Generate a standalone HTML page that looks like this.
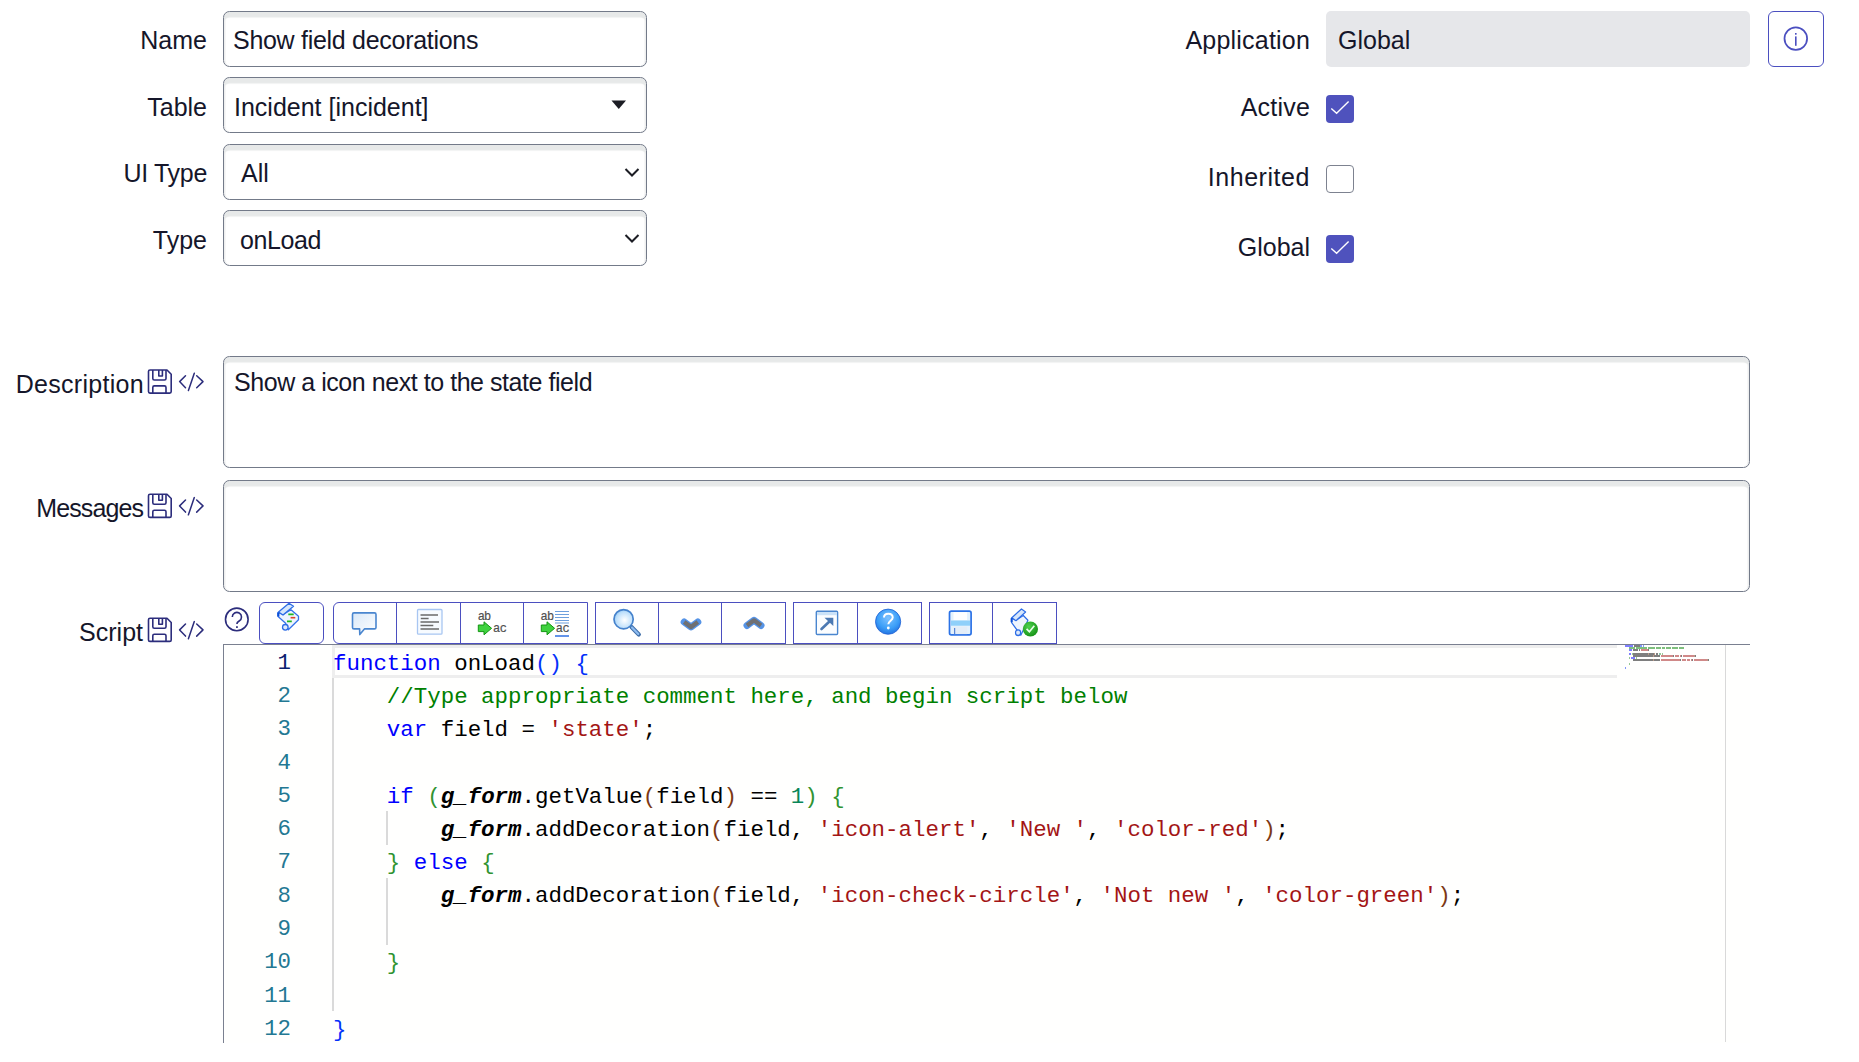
<!DOCTYPE html>
<html>
<head>
<meta charset="utf-8">
<style>
html,body{margin:0;padding:0;background:#fff;}
body{width:1859px;height:1062px;position:relative;overflow:hidden;font-family:"Liberation Sans",sans-serif;color:#15162a;}
.a{position:absolute;}
.lbl{position:absolute;font-size:25px;line-height:28px;white-space:nowrap;text-align:right;}
.inp{position:absolute;box-sizing:border-box;border:1px solid #737a89;border-radius:6.5px;background:#fff;box-shadow:inset 0 6px 1px -0.5px #e7e9e9, inset 2px 0 1px -0.5px #eff0f0, inset -2px 0 1px -0.5px #eff0f0;}
.val{position:absolute;font-size:25px;line-height:28px;white-space:nowrap;}
.cb{position:absolute;box-sizing:border-box;width:28px;height:28px;border-radius:4px;}
.cb.on{background:#4f52bd;}
.cb.off{border:1px solid #7d8290;background:#fff;}
.code{position:absolute;font-family:"Liberation Mono",monospace;font-size:22.44px;line-height:33.28px;white-space:pre;color:#000;}
.ln{position:absolute;font-family:"Liberation Mono",monospace;font-size:22.4px;line-height:33.28px;color:#237893;text-align:right;width:60px;}
.k{color:#0000ff}.c{color:#008000}.s{color:#a31515}.n{color:#098658}
.b1{color:#0431fa}.b2{color:#319331}.b3{color:#7b3814}
.gf{font-weight:bold;font-style:italic}
.tb{position:absolute;box-sizing:border-box;top:602px;height:42px;border:1px solid #4b4fc0;background:#fff;}
.tdiv{position:absolute;top:0;bottom:0;width:1px;background:#4b4fc0;}
.mm div{position:absolute;height:2px;}
</style>
</head>
<body>
<!-- Left column labels -->
<div class="lbl" style="right:1652px;top:26px;">Name</div>
<div class="lbl" style="right:1652px;top:93px;">Table</div>
<div class="lbl" style="right:1652px;top:159px;letter-spacing:-0.3px;">UI Type</div>
<div class="lbl" style="right:1652px;top:226px;">Type</div>

<div class="inp" style="left:223px;top:11px;width:424px;height:56px;"></div>
<div class="val" style="left:233px;top:26px;letter-spacing:-0.29px;">Show field decorations</div>

<div class="inp" style="left:223px;top:77px;width:424px;height:56px;"></div>
<div class="val" style="left:234px;top:93px;">Incident [incident]</div>

<div class="inp" style="left:223px;top:144px;width:424px;height:56px;"></div>
<div class="val" style="left:241px;top:159px;">All</div>

<div class="inp" style="left:223px;top:210px;width:424px;height:56px;"></div>
<div class="val" style="left:240px;top:226px;letter-spacing:-0.4px;">onLoad</div>

<!-- Right column -->
<div class="lbl" style="right:549px;top:26px;letter-spacing:0.2px;">Application</div>
<div class="a" style="left:1326px;top:11px;width:424px;height:56px;background:#e6e7ea;border-radius:5px;"></div>
<div class="val" style="left:1338px;top:26px;">Global</div>
<div class="a" style="left:1768px;top:11px;width:56px;height:56px;box-sizing:border-box;border:1px solid #4b4fc0;border-radius:6px;"></div>

<div class="lbl" style="right:549px;top:93px;letter-spacing:0.2px;">Active</div>
<div class="cb on" style="left:1326px;top:95px;"></div>
<div class="lbl" style="right:549px;top:163px;letter-spacing:0.55px;">Inherited</div>
<div class="cb off" style="left:1326px;top:165px;"></div>
<div class="lbl" style="right:549px;top:233px;">Global</div>
<div class="cb on" style="left:1326px;top:235px;"></div>

<!-- Description / Messages -->
<div class="lbl" style="right:1715px;top:370px;letter-spacing:0.3px;">Description</div>
<div class="inp" style="left:223px;top:356px;width:1527px;height:112px;"></div>
<div class="val" style="left:234px;top:368px;letter-spacing:-0.45px;">Show a icon next to the state field</div>

<div class="lbl" style="right:1716px;top:494px;letter-spacing:-0.9px;">Messages</div>
<div class="inp" style="left:223px;top:480px;width:1527px;height:112px;"></div>

<div class="lbl" style="right:1716px;top:618px;">Script</div>

<!-- Toolbar -->
<div class="tb" style="left:259px;width:65px;border-radius:6px;"></div>
<div class="tb" style="left:333px;width:255px;border-radius:6px 0 0 6px;">
  <div class="tdiv" style="left:62px"></div><div class="tdiv" style="left:126px"></div><div class="tdiv" style="left:189px"></div>
</div>
<div class="tb" style="left:595px;width:191px;">
  <div class="tdiv" style="left:62px"></div><div class="tdiv" style="left:125px"></div>
</div>
<div class="tb" style="left:793px;width:129px;">
  <div class="tdiv" style="left:63px"></div>
</div>
<div class="tb" style="left:929px;width:128px;">
  <div class="tdiv" style="left:62px"></div>
</div>

<!-- Editor -->
<div class="a" style="left:223px;top:644px;width:1527px;height:399px;background:#fffffe;border-top:1px solid #7a8090;border-left:1px solid #7a8090;box-sizing:border-box;"></div>


<!-- line highlight -->
<div class="a" style="left:332px;top:645px;width:1285px;height:33px;box-sizing:border-box;border-top:3px solid #eeeeee;border-bottom:3px solid #eeeeee;border-left:3px solid #eeeeee;"></div>
<!-- indent guides -->
<div class="a" style="left:332px;top:678px;width:2px;height:333px;background:#dadada;"></div>
<div class="a" style="left:386px;top:811px;width:2px;height:34px;background:#dadada;"></div>
<div class="a" style="left:386px;top:878px;width:2px;height:67px;background:#dadada;"></div>
<!-- line numbers -->
<div class="ln" style="left:231px;top:646.8px;white-space:pre;"><span style="color:#0b216f">1</span>
2
3
4
5
6
7
8
9
10
11
12</div>
<!-- code -->
<div class="code" style="left:333px;top:647.5px;"><span class="k">function</span> onLoad<span class="b1">()</span> <span class="b1">{</span>
    <span class="c">//Type appropriate comment here, and begin script below</span>
    <span class="k">var</span> field = <span class="s">&#x27;state&#x27;</span>;

    <span class="k">if</span> <span class="b2">(</span><span class="gf">g_form</span>.getValue<span class="b3">(</span>field<span class="b3">)</span> == <span class="n">1</span><span class="b2">)</span> <span class="b2">{</span>
        <span class="gf">g_form</span>.addDecoration<span class="b3">(</span>field, <span class="s">&#x27;icon-alert&#x27;</span>, <span class="s">&#x27;New &#x27;</span>, <span class="s">&#x27;color-red&#x27;</span><span class="b3">)</span>;
    <span class="b2">}</span> <span class="k">else</span> <span class="b2">{</span>
        <span class="gf">g_form</span>.addDecoration<span class="b3">(</span>field, <span class="s">&#x27;icon-check-circle&#x27;</span>, <span class="s">&#x27;Not new &#x27;</span>, <span class="s">&#x27;color-green&#x27;</span><span class="b3">)</span>;

    <span class="b2">}</span>

<span class="b1">}</span></div>
<!-- minimap -->
<div class="a mm" style="left:1625px;top:645px;width:100px;height:30px;opacity:0.5;"><div style="left:0px;top:0px;width:8px;background:#0000ff"></div><div style="left:9px;top:0px;width:6px;background:#000"></div><div style="left:15px;top:0px;width:2px;background:#0431fa"></div><div style="left:18px;top:0px;width:1px;background:#0431fa"></div><div style="left:4px;top:2px;width:6px;background:#008000"></div><div style="left:11px;top:2px;width:11px;background:#008000"></div><div style="left:23px;top:2px;width:7px;background:#008000"></div><div style="left:31px;top:2px;width:5px;background:#008000"></div><div style="left:37px;top:2px;width:3px;background:#008000"></div><div style="left:41px;top:2px;width:5px;background:#008000"></div><div style="left:47px;top:2px;width:6px;background:#008000"></div><div style="left:54px;top:2px;width:5px;background:#008000"></div><div style="left:4px;top:4px;width:3px;background:#0000ff"></div><div style="left:8px;top:4px;width:5px;background:#000"></div><div style="left:14px;top:4px;width:1px;background:#000"></div><div style="left:16px;top:4px;width:7px;background:#a31515"></div><div style="left:23px;top:4px;width:1px;background:#000"></div><div style="left:4px;top:8px;width:2px;background:#0000ff"></div><div style="left:7px;top:8px;width:1px;background:#319331"></div><div style="left:8px;top:8px;width:6px;background:#000"></div><div style="left:14px;top:8px;width:9px;background:#000"></div><div style="left:23px;top:8px;width:1px;background:#7b3814"></div><div style="left:24px;top:8px;width:5px;background:#000"></div><div style="left:29px;top:8px;width:1px;background:#7b3814"></div><div style="left:31px;top:8px;width:2px;background:#000"></div><div style="left:34px;top:8px;width:1px;background:#098658"></div><div style="left:35px;top:8px;width:1px;background:#319331"></div><div style="left:37px;top:8px;width:1px;background:#319331"></div><div style="left:8px;top:10px;width:6px;background:#000"></div><div style="left:14px;top:10px;width:14px;background:#000"></div><div style="left:28px;top:10px;width:1px;background:#7b3814"></div><div style="left:29px;top:10px;width:6px;background:#000"></div><div style="left:36px;top:10px;width:12px;background:#a31515"></div><div style="left:48px;top:10px;width:1px;background:#000"></div><div style="left:50px;top:10px;width:4px;background:#a31515"></div><div style="left:55px;top:10px;width:1px;background:#a31515"></div><div style="left:56px;top:10px;width:1px;background:#000"></div><div style="left:58px;top:10px;width:11px;background:#a31515"></div><div style="left:69px;top:10px;width:1px;background:#7b3814"></div><div style="left:70px;top:10px;width:1px;background:#000"></div><div style="left:4px;top:12px;width:1px;background:#319331"></div><div style="left:6px;top:12px;width:4px;background:#0000ff"></div><div style="left:11px;top:12px;width:1px;background:#319331"></div><div style="left:8px;top:14px;width:6px;background:#000"></div><div style="left:14px;top:14px;width:14px;background:#000"></div><div style="left:28px;top:14px;width:1px;background:#7b3814"></div><div style="left:29px;top:14px;width:6px;background:#000"></div><div style="left:36px;top:14px;width:19px;background:#a31515"></div><div style="left:55px;top:14px;width:1px;background:#000"></div><div style="left:57px;top:14px;width:4px;background:#a31515"></div><div style="left:62px;top:14px;width:3px;background:#a31515"></div><div style="left:66px;top:14px;width:1px;background:#a31515"></div><div style="left:67px;top:14px;width:1px;background:#000"></div><div style="left:69px;top:14px;width:13px;background:#a31515"></div><div style="left:82px;top:14px;width:1px;background:#7b3814"></div><div style="left:83px;top:14px;width:1px;background:#000"></div><div style="left:4px;top:18px;width:1px;background:#319331"></div><div style="left:0px;top:22px;width:1px;background:#0431fa"></div></div>
<!-- overview ruler border -->
<div class="a" style="left:1725px;top:645px;width:1px;height:397px;background:#d9d9d9;"></div>

<svg class="a" style="left:0;top:0;" width="1859" height="1062" viewBox="0 0 1859 1062">
<defs>
  <radialGradient id="glass" cx="0.55" cy="0.55" r="0.6"><stop offset="0" stop-color="#ffffff"/><stop offset="0.7" stop-color="#bfe0fb"/><stop offset="1" stop-color="#8cc4f2"/></radialGradient>
  <radialGradient id="bluehelp" cx="0.5" cy="0.35" r="0.75"><stop offset="0" stop-color="#7fc2ff"/><stop offset="0.55" stop-color="#3c9ff8"/><stop offset="1" stop-color="#1a62d8"/></radialGradient>
  <linearGradient id="bub" x1="0" y1="0" x2="1" y2="1"><stop offset="0" stop-color="#d9e8f8"/><stop offset="1" stop-color="#ffffff"/></linearGradient>
  <radialGradient id="greenck" cx="0.4" cy="0.35" r="0.7"><stop offset="0" stop-color="#4fd24f"/><stop offset="1" stop-color="#138f13"/></radialGradient>
  <g id="saveic" fill="none" stroke="#2c2d7c" stroke-width="1.6" stroke-linejoin="round">
    <path d="M2,1 H19 L23.2,5.2 V22.6 Q23.2,24.1 21.7,24.1 H2 Q0.5,24.1 0.5,22.6 V2.5 Q0.5,1 2,1 Z"/>
    <path d="M4.8,1 V9.5 Q4.8,11 6.3,11 H16.5 Q18,11 18,9.5 V1"/>
    <path d="M10.8,1 V7 H14.4 V1"/>
    <path d="M4.8,24.1 V18.4 Q4.8,16.9 6.3,16.9 H16.5 Q18,16.9 18,18.4 V24.1"/>
  </g>
  <g id="codeic" fill="none" stroke="#2c2d7c" stroke-width="1.5" stroke-linecap="round" stroke-linejoin="round">
    <path d="M37.5,6.7 L31.6,12.6 L37.5,18.8"/>
    <path d="M46.3,4.3 L40.4,21.5"/>
    <path d="M48.7,6.7 L55,12.6 L48.7,18.8"/>
  </g>
  <g id="scroll">
    <path d="M13,14.5 L21,9.8 L28.5,16.3 L28.5,19.8 L18.3,29.8 L15.6,23.2 L8.1,16.6 L8.1,12.5 Z" fill="#eef4fd" stroke="#3472ea" stroke-width="1.3" stroke-linejoin="round"/>
    <path d="M8.5,12 L19,3.3 L23.5,6.3 L13,15 Z" fill="#d6e6fb" stroke="#2d6de6" stroke-width="1.3" stroke-linejoin="round"/>
    <path d="M8.3,12.5 L8.3,16.5" stroke="#0b4fd6" stroke-width="2.2"/>
    <circle cx="15.3" cy="27.3" r="2.8" fill="#dce9fb" stroke="#2d6de6" stroke-width="1.3"/>
  </g>
</defs>

<!-- dropdown indicators -->
<polygon points="611.5,100.5 626,100.5 618.75,109" fill="#1c1d24"/>
<polyline points="625.5,169 632,175.5 638.5,169" fill="none" stroke="#1c1d24" stroke-width="2"/>
<polyline points="625.5,235 632,241.5 638.5,235" fill="none" stroke="#1c1d24" stroke-width="2"/>

<!-- checkmarks -->
<polyline points="1331.3,108.4 1336.6,113.2 1348.6,101.6" fill="none" stroke="#fff" stroke-width="1.4"/>
<polyline points="1331.3,248.4 1336.6,253.2 1348.6,241.6" fill="none" stroke="#fff" stroke-width="1.4"/>

<!-- info icon -->
<circle cx="1795.8" cy="38.6" r="11.3" fill="none" stroke="#4b4fc0" stroke-width="1.75"/>
<rect x="1795" y="36.4" width="1.6" height="9.4" fill="#4b4fc0"/>
<rect x="1795" y="33" width="1.6" height="1.7" fill="#4b4fc0"/>

<!-- label icons -->
<use href="#saveic" x="148" y="369"/><use href="#codeic" x="148" y="369"/>
<use href="#saveic" x="148" y="493.3"/><use href="#codeic" x="148" y="493.3"/>
<use href="#saveic" x="148" y="617.3"/><use href="#codeic" x="148" y="617.3"/>

<!-- help circle -->
<circle cx="236.8" cy="619.4" r="11.3" fill="none" stroke="#2c2d7c" stroke-width="1.6"/>
<path d="M232.3,617 A4.6,4.6 0 1 1 239.2,621 C238,621.7 236.9,622 236.9,624" fill="none" stroke="#2c2d7c" stroke-width="1.6"/>
<rect x="236.1" y="626.2" width="1.7" height="1.8" fill="#2c2d7c"/>

<!-- toolbar: script beautify -->
<g transform="translate(270,600)">
  <use href="#scroll"/>
  <path d="M18.3,14.4 H23.7 M17,21.4 H21.8" stroke="#22b722" stroke-width="1.6"/>
  <path d="M20.6,17.7 H25.3" stroke="#e0432a" stroke-width="1.6"/>
</g>
<!-- comment -->
<path d="M354,612.9 H374.5 Q376,612.9 376,614.4 V627.4 Q376,628.9 374.5,628.9 H364.4 L359.8,634.6 L359.6,628.9 H354 Q352.5,628.9 352.5,627.4 V614.4 Q352.5,612.9 354,612.9 Z" fill="url(#bub)" stroke="#4a86cf" stroke-width="1.6" stroke-linejoin="round"/>
<!-- format -->
<rect x="417.5" y="609.5" width="24.5" height="24.7" rx="1" fill="#f7fbff" stroke="#a8c6f2" stroke-width="1.3"/>
<path d="M420.5,615 H438 M420.8,618.5 H428.6 M420.5,622 H439 M420.5,625.5 H433.3 M420.5,629 H439" stroke="#6b6b6b" stroke-width="1.6"/>
<!-- replace -->
<text x="477.8" y="619.6" font-family="Liberation Mono" font-size="12" fill="#4f4f4f" stroke="#4f4f4f" stroke-width="0.2" letter-spacing="-0.9" transform="translate(477.8,619.6) scale(1,1.1) translate(-477.8,-619.6)">ab</text>
<text x="493" y="631.8" font-family="Liberation Mono" font-size="12" fill="#4f4f4f" stroke="#4f4f4f" stroke-width="0.2" letter-spacing="-0.5" transform="translate(493,631.8) scale(1,1.1) translate(-493,-631.8)">ac</text>
<polygon points="478.3,625 484,625 484,621.8 491.6,628.3 484,634.8 484,631.6 478.3,631.6" fill="#3fd23f" stroke="#139513" stroke-width="1"/>
<!-- replace all -->
<path d="M555,611.5 H569 M555,614.5 H569 M555,617.5 H569 M555,620.5 H569 M555,623 H569" stroke="#6d9fdc" stroke-width="1.1"/>
<text x="540.6" y="619.6" font-family="Liberation Mono" font-size="12" fill="#4f4f4f" stroke="#4f4f4f" stroke-width="0.2" letter-spacing="-0.9" transform="translate(540.6,619.6) scale(1,1.1) translate(-540.6,-619.6)">ab</text>
<text x="555.8" y="632.3" font-family="Liberation Mono" font-size="12" fill="#4f4f4f" stroke="#4f4f4f" stroke-width="0.2" letter-spacing="-0.5" transform="translate(555.8,632.3) scale(1,1.1) translate(-555.8,-632.3)">ac</text>
<path d="M555,636 H569" stroke="#2f6fe0" stroke-width="1.5"/>
<polygon points="541.3,625 547,625 547,621.8 554.6,628.3 547,634.8 547,631.6 541.3,631.6" fill="#3fd23f" stroke="#139513" stroke-width="1"/>
<!-- search -->
<line x1="631.5" y1="627" x2="638.8" y2="634.5" stroke="#3f6ea8" stroke-width="4.2" stroke-linecap="round"/>
<line x1="632" y1="627.5" x2="638.3" y2="634" stroke="#8dbbf0" stroke-width="2.2" stroke-linecap="round"/>
<circle cx="623.6" cy="619.2" r="9.6" fill="url(#glass)" stroke="#4582cc" stroke-width="1.7"/>
<!-- down / up -->
<polyline points="684.2,622 691,627 697.8,622" fill="none" stroke="#2a78e0" stroke-width="7" stroke-linejoin="round" stroke-linecap="round" opacity="0.8"/>
<polyline points="684.2,622 691,627 697.8,622" fill="none" stroke="#707072" stroke-width="4.2" stroke-linejoin="round"/>
<polyline points="747,625.5 754,620.3 761,625.5" fill="none" stroke="#2a78e0" stroke-width="7" stroke-linejoin="round" stroke-linecap="round" opacity="0.8"/>
<polyline points="747,625.5 754,620.3 761,625.5" fill="none" stroke="#707072" stroke-width="4.2" stroke-linejoin="round"/>
<!-- fullscreen -->
<rect x="816.3" y="611.3" width="21.3" height="23.2" rx="1" fill="#fbfdff" stroke="#4a86cf" stroke-width="1.4"/>
<rect x="817" y="612" width="20" height="3.2" fill="#cbe2f8"/>
<line x1="821.5" y1="629" x2="830.5" y2="620.5" stroke="#4b79b3" stroke-width="2.6" stroke-linecap="round"/>
<polygon points="824.5,617.8 833.3,617.8 833.3,626" fill="#4b79b3"/>
<!-- help blue -->
<circle cx="888.1" cy="621.7" r="12.6" fill="url(#bluehelp)" stroke="#1d5fd4" stroke-width="0.8"/>
<path d="M884,617.6 C884,614.9 886,613.8 888.3,613.8 C890.8,613.8 892.7,615.3 892.7,617.6 C892.7,620.6 888.3,621 888.3,624.3" fill="none" stroke="#fff" stroke-width="2"/>
<circle cx="888.3" cy="628" r="1.4" fill="#fff"/>
<!-- save -->
<rect x="949.5" y="611.2" width="21.6" height="23.6" rx="1.8" fill="#e4f2fd" stroke="#2b72e6" stroke-width="1.7"/>
<rect x="953.5" y="612.2" width="13.6" height="8" fill="#ffffff"/>
<rect x="951" y="620.5" width="19" height="5.2" fill="#8fd0fa"/>
<rect x="953.5" y="626.5" width="13.6" height="7.6" fill="#e3edf8"/>
<line x1="954.7" y1="628" x2="954.7" y2="634" stroke="#3a6fcf" stroke-width="1"/>
<!-- script check -->
<g transform="translate(1004,605.7) scale(0.92,1)">
  <path d="M13,14.5 L21,9.8 L26,14.5 L18.3,29.5 L8.3,17 L8.3,12.5 Z" fill="#eef4fd" stroke="#2d6de6" stroke-width="1.3" stroke-linejoin="round"/>
  <path d="M8.5,12 L19,3.3 L23.5,6.3 L13,15 Z" fill="#d6e6fb" stroke="#2d6de6" stroke-width="1.3" stroke-linejoin="round"/>
  <path d="M8.3,12.5 L8.3,16.5" stroke="#0b4fd6" stroke-width="2.2"/>
  <circle cx="15.3" cy="27" r="2.8" fill="#dce9fb" stroke="#2d6de6" stroke-width="1.3"/>
</g>
<circle cx="1030.4" cy="629" r="7.6" fill="url(#greenck)"/>
<polyline points="1026.6,628.8 1029.4,631.8 1034.3,625.8" fill="none" stroke="#e9ffe9" stroke-width="1.7"/>
</svg>

</body>
</html>
